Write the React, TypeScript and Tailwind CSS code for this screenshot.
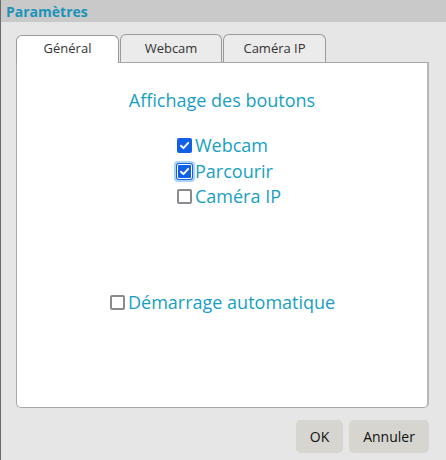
import React from "react";

const font = { fontFamily: '"Open Sans", "Noto Sans", sans-serif' };

function Check({ checked, focus }: { checked: boolean; focus?: boolean }) {
  if (!checked) {
    return <span className="inline-block w-[15px] h-[15px] border-2 border-[#8a8a8f] rounded-[2px] bg-white shrink-0" />;
  }
  const box = (
    <span className={"inline-flex items-center justify-center w-[15px] h-[15px] rounded-[2px] bg-[#1360e8] shrink-0 " + (focus ? "ring-1 ring-inset ring-white" : "")}>
      <svg width="11" height="11" viewBox="0 0 10 10">
        <path d="M1.8 5.2 L4 7.4 L8.4 2.6" stroke="white" strokeWidth="1.7" fill="none" strokeLinecap="round" strokeLinejoin="round" />
      </svg>
    </span>
  );
  if (focus) {
    return (
      <span className="inline-flex items-center justify-center w-[21px] h-[21px] -mx-[3px] rounded-[4px] bg-[#a9d4f5] shrink-0">
        <span className="inline-flex items-center justify-center w-[17px] h-[17px] rounded-[3px] bg-[#1360e8]">
          {box}
        </span>
      </span>
    );
  }
  return box;
}

function Row({ label, checked, focus }: { label: string; checked: boolean; focus?: boolean }) {
  return (
    <div className="flex items-center h-[25.5px] gap-[2px] text-[18px] text-[#179fc3]">
      <Check checked={checked} focus={focus} />
      <span className="ml-[1px]">{label}</span>
    </div>
  );
}

export default function App() {
  return (
    <div className="w-[446px] h-[460px] bg-[#e6e6e6] flex flex-col border-l border-[#6a6a6a]" style={font}>
      <div className="h-[22px] bg-[#c9c9c9] flex items-center pl-[5px] text-[14px] font-bold text-[#1b93b8]">
        Paramètres
      </div>
      <div className="pl-[15px] pr-[17px] pt-[12px] flex flex-col">
        <div className="flex h-[28px] items-end text-[13px] text-[#333]">
          <div className="w-[103px] h-[28px] bg-white border border-b-0 border-[#9a9a9a] rounded-t-[6px] flex items-center justify-center relative z-10 -mb-px pb-[1px]">
            Général
          </div>
          <div className="w-[102px] h-[28px] bg-[#ebebeb] border border-b-0 border-[#9a9a9a] rounded-t-[6px] flex items-center justify-center ml-[1px]">
            Webcam
          </div>
          <div className="w-[103px] h-[28px] bg-[#ebebeb] border border-b-0 border-[#9a9a9a] rounded-t-[6px] flex items-center justify-center ml-[1px]">
            Caméra IP
          </div>
        </div>
        <div className="h-[346px] bg-white border border-[#a8a8a8] border-r-2 border-r-[#b8b8b8] rounded-b-[5px] flex flex-col">
          <div className="pt-[26px] text-center text-[18px] leading-[22px] text-[#179fc3]">Affichage des boutons</div>
          <div className="pt-[22px] pl-[160px] flex flex-col">
            <Row label="Webcam" checked />
            <Row label="Parcourir" checked focus />
            <Row label="Caméra IP" checked={false} />
          </div>
          <div className="pt-[80px] pl-[93px]">
            <Row label="Démarrage automatique" checked={false} />
          </div>
        </div>
        <div className="flex justify-end gap-[6px] mt-[12px] text-[14px] text-[#111]">
          <button className="w-[47px] h-[33px] bg-[#d6d5cf] rounded-[5px]">OK</button>
          <button className="w-[80px] h-[33px] bg-[#d6d5cf] rounded-[5px]">Annuler</button>
        </div>
      </div>
    </div>
  );
}
